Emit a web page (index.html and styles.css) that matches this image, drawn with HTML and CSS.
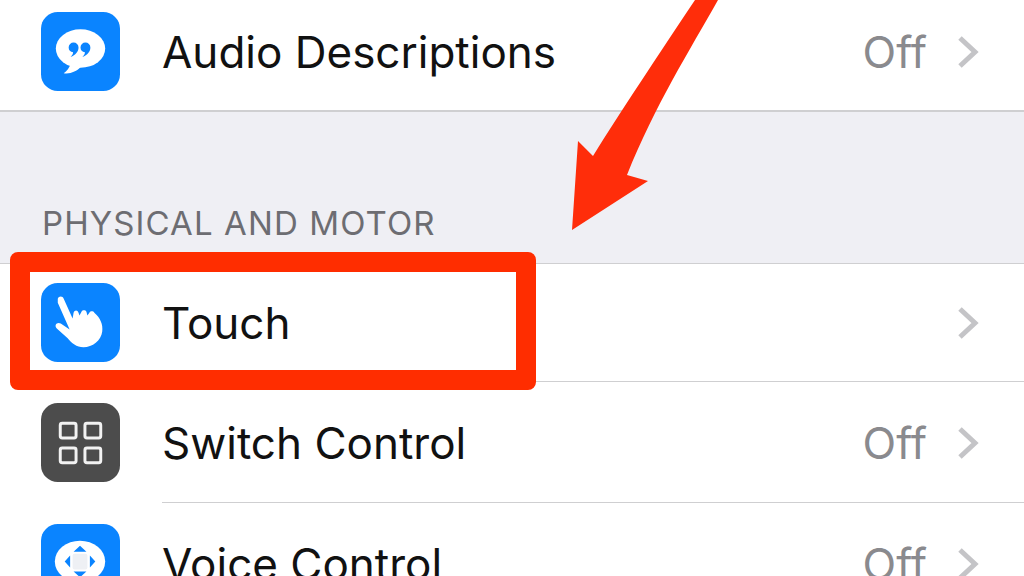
FILE: index.html
```html
<!DOCTYPE html>
<html lang="en">
  <head>
    <meta charset="UTF-8" />
    <title>Accessibility</title>
    <link rel="stylesheet" href="styles.css">
  </head>
  <body>
    <div class="page">
      <div class="row row-short row-last">
        <svg class="icon" viewBox="0 0 80 80">
          <rect width="80" height="80" rx="17" fill="#0a84ff" />
          <ellipse cx="40" cy="37" rx="25" ry="19.5" fill="#fff" />
          <path d="M30 52 C29 57 26 60 23 62 C30 63 36 60 40 56 Z" fill="#fff" />
          <path d="M28 36 a5 5 0 1 1 10 0 c0 4 -3 8 -8 9.5 c1.5 -1.5 2.5 -3 2.5 -4.7 a5 5 0 0 1 -4.5 -4.8 Z" fill="#0a84ff" />
          <path d="M40 36 a5 5 0 1 1 10 0 c0 4 -3 8 -8 9.5 c1.5 -1.5 2.5 -3 2.5 -4.7 a5 5 0 0 1 -4.5 -4.8 Z" fill="#0a84ff" />
        </svg>
        <div class="row-body">
          <span class="row-title">Audio Descriptions</span>
          <span class="row-value">Off</span>
          <svg class="chevron" viewBox="0 0 22 34"><path d="M3 3 L18 17 L3 31" /></svg>
        </div>
      </div>

      <div class="section">
        <div class="section-title">PHYSICAL AND MOTOR</div>
      </div>

      <div class="row row-short">
        <svg class="icon" viewBox="0 0 80 80">
          <rect width="80" height="80" rx="17" fill="#0a84ff" />
          <path d="M17 16 C18 13 22 13 23 16 L32 36 L33 30 C34 27 37 27 38 30 L39 33 L41 29 C42 27 45 27 46 29 L47 33 L49 30 C50 28 53 28 54 30 C60 35 63 42 62 49 C61 58 52 65 43 65 C36 65 31 61 27 56 L16 46 C13 43 16 39 20 41 L29 47 L17 20 Z" fill="#fff" />
        </svg>
        <div class="row-body">
          <span class="row-title">Touch</span>
          <svg class="chevron" viewBox="0 0 22 34"><path d="M3 3 L18 17 L3 31" /></svg>
        </div>
      </div>

      <div class="row">
        <svg class="icon" viewBox="0 0 80 80">
          <rect width="80" height="80" rx="17" fill="#4c4c4c" />
          <g fill="none" stroke="#f2f2f2" stroke-width="3">
            <rect x="19.5" y="20.5" width="16" height="15" rx="2" />
            <rect x="44.5" y="20.5" width="16" height="15" rx="2" />
            <rect x="19.5" y="45.5" width="16" height="15" rx="2" />
            <rect x="44.5" y="45.5" width="16" height="15" rx="2" />
          </g>
        </svg>
        <div class="row-body">
          <span class="row-title">Switch Control</span>
          <span class="row-value">Off</span>
          <svg class="chevron" viewBox="0 0 22 34"><path d="M3 3 L18 17 L3 31" /></svg>
        </div>
      </div>

      <div class="row">
        <svg class="icon" viewBox="0 0 80 80">
          <rect width="80" height="80" rx="17" fill="#0a84ff" />
          <ellipse cx="39.5" cy="38" rx="25.5" ry="21" fill="#fff" />
          <rect x="32" y="30" width="15" height="16" rx="2" fill="#eef0f4" />
          <path d="M39.5 22 L46 28 L33 28 Z M39.5 54 L46 48 L33 48 Z M24 38 L29.5 32 L29.5 44 Z M55 38 L49.5 32 L49.5 44 Z" fill="#0a84ff" />
        </svg>
        <div class="row-body">
          <span class="row-title">Voice Control</span>
          <span class="row-value">Off</span>
          <svg class="chevron" viewBox="0 0 22 34"><path d="M3 3 L18 17 L3 31" /></svg>
        </div>
      </div>
    </div>

    <svg class="arrow" viewBox="0 0 1024 576">
      <path d="M695 0 L718 0 C690 50 655 105 627 175 L648 181 L572 230 L578 141 L593 156 C625 105 655 60 695 0 Z" />
    </svg>
    <div class="highlight"></div>
  </body>
</html>
```

FILE: styles.css
```css
html,
body {
  margin: 0;
  height: 576px;
  overflow: hidden;
  background-color: white;
}
body {
  position: relative;
  font-family: Inter, "Liberation Sans", Arial, sans-serif;
}
.page {
  margin-top: -7px;
}
.row {
  display: flex;
  align-items: center;
  box-sizing: border-box;
  height: 121px;
  padding-left: 41px;
  background-color: white;
}
.row-short {
  height: 118px;
}
.row-last {
  height: 119px;
  border-bottom: 2px solid #cfcfd1;
}
.icon {
  flex: none;
  width: 79px;
  height: 79px;
}
.row-short .icon {
  margin-bottom: 1px;
}
.row-last .icon {
  margin-bottom: 0;
}
.row-body {
  flex: 1;
  display: flex;
  align-items: center;
  align-self: stretch;
  margin-left: 42px;
  padding-top: 1px;
  padding-right: 45px;
  border-bottom: 1px solid #cfcfd1;
}
.row-short .row-body {
  padding-top: 0;
}
.row-last .row-body {
  border-bottom: none;
}
.row-title {
  flex: 1;
  font-size: 44px;
  color: #111;
}
.row-value {
  font-size: 44px;
  color: #8a8a8e;
  margin-right: 30px;
}
.chevron {
  width: 22px;
  height: 34px;
  fill: none;
  stroke: #c4c4c7;
  stroke-width: 5;
}
.section {
  display: flex;
  align-items: flex-end;
  box-sizing: border-box;
  height: 152px;
  padding: 0 0 23px 42px;
  background-color: #efeff4;
  border-bottom: 1px solid #cfcfd1;
}
.section-title {
  font-size: 33px;
  line-height: 34px;
  letter-spacing: 1.1px;
  color: #6d6d72;
}
.arrow {
  position: absolute;
  left: 0;
  top: 0;
  width: 1024px;
  height: 576px;
  fill: #ff2d0a;
}
.highlight {
  position: absolute;
  left: 10px;
  top: 252px;
  width: 486px;
  height: 98px;
  border: 20px solid #ff2d00;
  border-radius: 8px;
}
```
